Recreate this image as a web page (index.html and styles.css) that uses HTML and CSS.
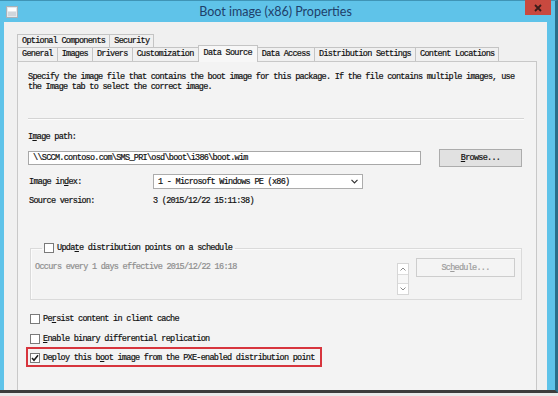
FILE: index.html
```html
<!DOCTYPE html>
<html lang="en">

<head>
    <meta charset="UTF-8">
    <title>Boot image (x86) Properties</title>

    <link rel="stylesheet" href="styles.css">
</head>

<body>

    <div class="window">
        <!-- title bar -->
        <div class="titlebar">
            <svg class="app-icon" width="12" height="12" viewBox="0 0 12 12">
                <rect x="0.5" y="0.5" width="11" height="11" fill="#e4e8ec" stroke="#a9b1b8"/>
                <rect x="2" y="2" width="8" height="3" fill="#ffffff"/>
                <rect x="2" y="6" width="8" height="4" fill="#cfd6dc"/>
            </svg>
            <div class="title">Boot image (x86) Properties</div>
            <div class="close">
                <svg width="8" height="8" viewBox="0 0 8 8">
                    <path d="M1 1 L7 7 M7 1 L1 7" stroke="#3b1c1a" stroke-width="1.8"/>
                </svg>
            </div>
        </div>

        <div class="client">
            <!-- tabs -->
            <div class="tabs">
                <div class="tab-row">
                    <div class="tab">Optional Components</div>
                    <div class="tab">Security</div>
                </div>
                <div class="tab-row front">
                    <div class="tab">General</div>
                    <div class="tab">Images</div>
                    <div class="tab">Drivers</div>
                    <div class="tab">Customization</div>
                    <div class="tab active">Data Source</div>
                    <div class="tab">Data Access</div>
                    <div class="tab">Distribution Settings</div>
                    <div class="tab">Content Locations</div>
                </div>
            </div>

            <div class="page">
                <p class="intro">Specify the image file that contains the boot image for this package. If the file contains multiple images, use<br>the Image tab to select the correct image.</p>
                <div class="rule"></div>

                <div class="label">I<u>m</u>age path:</div>
                <div class="path-row">
                    <div class="textbox">\\SCCM.contoso.com\SMS_PRI\osd\boot\i386\boot.wim</div>
                    <div class="button browse"><span><u>B</u>rowse...</span></div>
                </div>

                <div class="field">
                    <span class="field-name">Image in<u>d</u>ex:</span>
                    <div class="combo">
                        <span>1 - Microsoft Windows PE (x86)</span>
                        <svg width="7" height="5" viewBox="0 0 7 5">
                            <path d="M0.5 0.8 L3.5 3.8 L6.5 0.8" fill="none" stroke="#333" stroke-width="1.2"/>
                        </svg>
                    </div>
                </div>
                <div class="field">
                    <span class="field-name">Source version:</span>
                    <span>3 (2015/12/22 15:11:38)</span>
                </div>

                <fieldset class="group">
                    <legend><span class="check"></span><span>Upda<u>t</u>e distribution points on a schedule</span></legend>
                    <div class="group-body">
                        <span class="muted">Occurs every 1 days effective 2015/12/22 16:18</span>
                        <div class="spin">
                            <div class="spin-btn">
                                <svg width="6" height="4" viewBox="0 0 6 4"><path d="M0.5 3.5 L3 1 L5.5 3.5" fill="none" stroke="#8a8a8a"/></svg>
                            </div>
                            <div class="spin-track"></div>
                            <div class="spin-btn">
                                <svg width="6" height="4" viewBox="0 0 6 4"><path d="M0.5 0.5 L3 3 L5.5 0.5" fill="none" stroke="#8a8a8a"/></svg>
                            </div>
                        </div>
                        <div class="button disabled"><span>Sc<u>h</u>edule...</span></div>
                    </div>
                </fieldset>

                <div class="option first"><span class="check"></span><span>Pe<u>r</u>sist content in client cache</span></div>
                <div class="option"><span class="check"></span><span><u>E</u>nable binary differential replication</span></div>
                <div class="option highlight">
                    <span class="check">
                        <svg width="8" height="8" viewBox="0 0 8 8"><path d="M1 4 L3 6.3 L7 1.2" fill="none" stroke="#1a1a1a" stroke-width="1.5"/></svg>
                    </span>
                    <span>Deploy this b<u>o</u>ot image from the PXE-enabled distribution point</span>
                </div>
            </div>
        </div>
    </div>

</body>

</html>
```

FILE: styles.css
```css
body {
    margin: 0;
    background: #e8e8e8;
}

/* window frame */
.window {
    box-sizing: border-box;
    width: 558px;
    height: 393px;
    display: flex;
    flex-direction: column;
    padding-left: 4px;
    background: #5fc3e9;
    border-top: 1px solid #3f94b6;
    border-right: 3px solid #2b6f8a;
    border-bottom: 3px solid #3c3c3c;
}

.titlebar {
    height: 21px;
    display: flex;
    align-items: center;
}

.app-icon {
    margin: 0 0 0 2px;
}

.title {
    flex: 1;
    text-align: center;
    font-family: Lato, "Noto Sans", sans-serif;
    font-size: 12.5px;
    color: #20406a;
    padding-left: 8px;
}

.close {
    align-self: flex-start;
    width: 26px;
    height: 15px;
    margin-top: -1px;
    margin-right: 4px;
    background: #c8493f;
    display: flex;
    align-items: center;
    justify-content: center;
}

/* dialog body */
.client {
    flex: 1;
    display: flex;
    flex-direction: column;
    margin-right: 8px;
    padding: 12px 10px 0 13px;
    background: #f0f0f0;
    font-family: "Liberation Mono", monospace;
    font-size: 8.5px;
    letter-spacing: -0.72px;
    color: #111;
    -webkit-text-stroke: 0.2px #111;
}

.tab-row {
    display: flex;
    height: 13px;
}

.tab-row.front {
    height: 14px;
    align-items: flex-end;
}

.tab {
    height: 12px;
    line-height: 12px;
    padding: 0 4px 0 4px;
    border: 1px solid #c4c4c4;
    border-bottom: none;
    margin-right: -1px;
    background: #f0f0f0;
    white-space: nowrap;
}

.tab-row.front .tab {
    height: 13px;
    line-height: 13px;
}

.tab-row.front .tab.active {
    height: 16px;
    line-height: 15px;
    margin-bottom: -1px;
    background: #f7f7f7;
    position: relative;
    z-index: 1;
    padding: 0 5px 0 5px;
}

.page {
    flex: 1;
    border: 1px solid #c8c8c8;
    border-bottom: none;
    background: #f3f3f3;
    padding: 10px 12px 0 10px;
    display: flex;
    flex-direction: column;
    align-items: flex-start;
}

.intro {
    margin: 0;
    line-height: 10px;
    white-space: nowrap;
}

.rule {
    align-self: stretch;
    margin-top: 26px;
    border-top: 1px solid #d4d4d4;
    border-bottom: 1px solid #fcfcfc;
}

.label {
    margin-top: 12px;
    line-height: 10px;
}

.path-row {
    margin-top: 7px;
    height: 18px;
    display: flex;
    align-items: center;
    gap: 18px;
}

.textbox {
    box-sizing: border-box;
    width: 393px;
    height: 14px;
    line-height: 12px;
    padding-left: 4px;
    border: 1px solid #a8a8a8;
    background: #fff;
    white-space: nowrap;
}

.button {
    box-sizing: border-box;
    height: 18px;
    display: flex;
    align-items: center;
    justify-content: center;
    border: 1px solid #acacac;
    background: #e1e1e1;
}

.browse {
    width: 83px;
}

.field {
    margin-top: 7px;
    display: flex;
    align-items: center;
    line-height: 10px;
}

.field-name {
    width: 124px;
    padding-left: 1px;
}

.combo {
    box-sizing: border-box;
    width: 210px;
    height: 15px;
    display: flex;
    align-items: center;
    justify-content: space-between;
    padding: 0 4px 0 4px;
    border: 1px solid #acacac;
    background: #fff;
}

/* schedule group */
.group {
    box-sizing: border-box;
    width: 492px;
    margin: 37px 0 0 2px;
    padding: 0 6px 4px 4px;
    border: 1px solid #dadada;
    box-shadow: inset 1px 1px 0 #fbfbfb;
}

.group legend {
    display: flex;
    align-items: center;
    gap: 3px;
    height: 10px;
    line-height: 10px;
    margin-left: 7px;
    padding: 0 3px 0 2px;
}

.group-body {
    display: flex;
    align-items: flex-start;
    padding-top: 5px;
}

.muted {
    flex: 1;
    margin-top: 4px;
    line-height: 10px;
    color: #8e8e8e;
    -webkit-text-stroke: 0.2px #8e8e8e;
}

.spin {
    box-sizing: border-box;
    width: 12px;
    height: 32px;
    margin: 5px 7px 0 0;
    display: flex;
    flex-direction: column;
    justify-content: space-between;
    border: 1px solid #d6d6d6;
    background: #f7f7f7;
}

.spin-btn {
    height: 10px;
    display: flex;
    align-items: center;
    justify-content: center;
    background: #fff;
}

.spin-btn:first-child {
    border-bottom: 1px solid #dcdcdc;
}

.spin-btn:last-child {
    border-top: 1px solid #dcdcdc;
}

.button.disabled {
    width: 99px;
    height: 19px;
    border-color: #cdcdcd;
    background: #f4f4f4;
    color: #9c9c9c;
    -webkit-text-stroke: 0.2px #9c9c9c;
}

/* check boxes */
.check {
    box-sizing: border-box;
    width: 10px;
    height: 10px;
    display: inline-flex;
    align-items: center;
    justify-content: center;
    border: 1px solid #7a7a7a;
    background: #fff;
    flex: none;
}

.option {
    display: flex;
    align-items: center;
    gap: 3px;
    height: 10px;
    line-height: 10px;
    margin-top: 10px;
    padding-left: 2px;
}

.option.first {
    margin-top: 14px;
}

.option.highlight {
    margin: 3px 0 0 -2px;
    padding: 4px 5px 2px 2px;
    border: 2px solid #d7353d;
}
```
